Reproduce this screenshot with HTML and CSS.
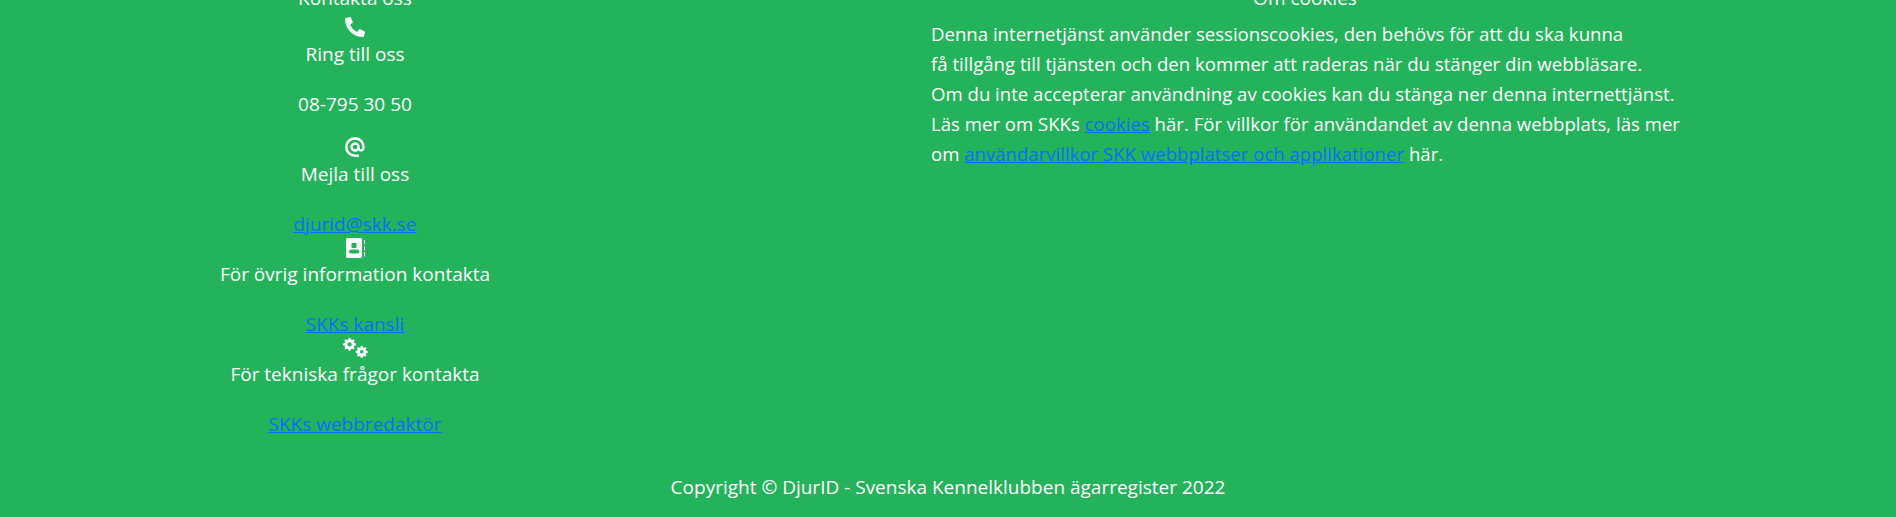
FILE: index.html
```html
<!DOCTYPE html>
<html lang="sv">
<head>
<meta charset="utf-8">
<title>DjurID</title>
<link rel="stylesheet" href="styles.css">
</head>
<body>
<footer class="footer">
  <div class="columns">
    <section class="contact">
      <h5 class="heading">Kontakta oss</h5>
      <svg class="icon" viewBox="0 51 512 512"><path d="M497.390 361.800l-112-48a24 24 0 0 0-28 6.900l-49.600 60.600A370.660 370.660 0 0 1 130.600 204.110l60.600-49.600a23.940 23.940 0 0 0 6.900-28l-48-112A24.160 24.160 0 0 0 122.600.610l-104 24A24 24 0 0 0 0 48c0 256.500 207.900 464 464 464a24 24 0 0 0 23.400-18.600l24-104a24.290 24.290 0 0 0-14.010-27.600z"/></svg>
      <p class="line">Ring till oss</p>
      <p class="line spaced">08-795 30 50</p>
      <svg class="icon" viewBox="0.8 2.6 18.4 18.4"><path fill-rule="evenodd" d="M10 .8a9.200 9.200 0 1 0 0 18.400h3.600v-2.400H10A6.800 6.800 0 1 1 16.800 10v.9c0 .7-.6 1.300-1.200 1.300s-1.200-.6-1.200-1.300V10a4.400 4.400 0 1 0-1.300 3.100 3.500 3.500 0 0 0 5.900-2.200V10A9 9 0 0 0 10 .8zm0 11.300a2.100 2.100 0 1 1 0-4.200 2.100 2.100 0 0 1 0 4.200z"/></svg>
      <p class="line">Mejla till oss</p>
      <p class="line"><a href="#">djurid@skk.se</a></p>
      <svg class="icon" viewBox="0 1 20 20"><path fill-rule="evenodd" d="M2.500 0h13c.8 0 1.500.7 1.500 1.500v17c0 .8-.7 1.500-1.500 1.500h-13C1.700 20 1 19.300 1 18.500v-17C1 .7 1.700 0 2.500 0zM7.500 5h3c.6 0 1 .4 1 1v3c0 .6-.4 1-1 1h-3c-.6 0-1-.4-1-1V6c0-.6.4-1 1-1zM6.500 11.500h5.500c1.400 0 2.500.8 2.500 2s-1.100 2-2.500 2H6.500c-1.400 0-2.500-.8-2.500-2s1.100-2 2.500-2z"/><path d="M19 2h1v4.500h-1zM19 8h1v4.500h-1zM19 14h1v4.500h-1z"/></svg>
      <p class="line">För övrig information kontakta</p>
      <p class="line"><a href="#">SKKs kansli</a></p>
      <svg class="icon cogs" viewBox="0 0 26 20"><path transform="translate(1 -1) scale(.8)" fill-rule="evenodd" d="M7 0h2.400l.4 2 1.500.6 1.700-1.100 1.700 1.700-1.100 1.700.6 1.500 2 .4v2.400l-2 .4-.6 1.500 1.100 1.700-1.700 1.700-1.700-1.100-1.500.6-.4 2H7l-.4-2-1.500-.6-1.700 1.100-1.700-1.700 1.100-1.700-.6-1.500-2-.4V6.800l2-.4.6-1.500-1.100-1.700 1.700-1.700 1.700 1.100 1.500-.6zM8.200 5.400a2.600 2.600 0 1 0 0 5.200 2.600 2.600 0 0 0 0-5.200z"/><path transform="translate(0 -1)" fill-rule="evenodd" d="M18.700 8h2l.3 1.400 1 .4 1.200-.8 1.400 1.400-.8 1.200.4 1 1.400.3v2l-1.400.3-.4 1 .8 1.200-1.400 1.400-1.200-.8-1 .4-.3 1.400h-2l-.3-1.400-1-.4-1.200.8-1.400-1.400.8-1.200-.4-1-1.400-.3v-2l1.400-.3.4-1-.8-1.200 1.400-1.400 1.200.8 1-.4zm1 4a1.800 1.800 0 1 0 0 3.600 1.800 1.800 0 0 0 0-3.600z"/></svg>
      <p class="line">För tekniska frågor kontakta</p>
      <p class="line"><a href="#">SKKs webbredaktör</a></p>
    </section>
    <section class="cookies">
      <h5 class="heading">Om cookies</h5>
      <p class="line">Denna internetjänst använder sessionscookies, den behövs för att du ska kunna<br>få tillgång till tjänsten och den kommer att raderas när du stänger din webbläsare.<br>Om du inte accepterar användning av cookies kan du stänga ner denna internettjänst.<br>Läs mer om SKKs <a href="#">cookies</a> här. För villkor för användandet av denna webbplats, läs mer<br>om <a href="#">användarvillkor SKK webbplatser och applikationer</a> här.</p>
    </section>
  </div>
  <p class="copyright">Copyright © DjurID - Svenska Kennelklubben ägarregister 2022</p>
</footer>
</body>
</html>
```
FILE: styles.css
```css
html, body {
  margin: 0;
  height: 517px;
  overflow: hidden;
  background: #24b35b;
}
.footer {
  margin-top: -17px;
  color: #fff;
  font-family: "Open Sans", sans-serif;
  font-size: 19px;
  line-height: 30px;
}
.columns {
  display: grid;
  grid-template-columns: 710px 772px;
  column-gap: 209px;
}
.contact {
  display: flex;
  flex-direction: column;
  align-items: center;
  text-align: center;
}
.cookies {
  padding: 0 12px;
}
.cookies .line {
  font-size: 18.6px;
  white-space: nowrap;
}
.heading {
  margin: 0 0 6px;
  font: inherit;
  text-align: center;
}
.line {
  margin: 0;
}
.spaced {
  margin: 20px 0;
}
.contact .line + .line {
  margin-top: 20px;
}
.contact .line.spaced {
  margin-bottom: 20px;
}
.icon {
  display: block;
  width: 20px;
  height: 20px;
  fill: #f8f9fa;
  overflow: visible;
}
.cogs {
  width: 26px;
}
a {
  color: #0d6efd;
}
.copyright {
  margin: 33px 0 0;
  text-align: center;
}
```
